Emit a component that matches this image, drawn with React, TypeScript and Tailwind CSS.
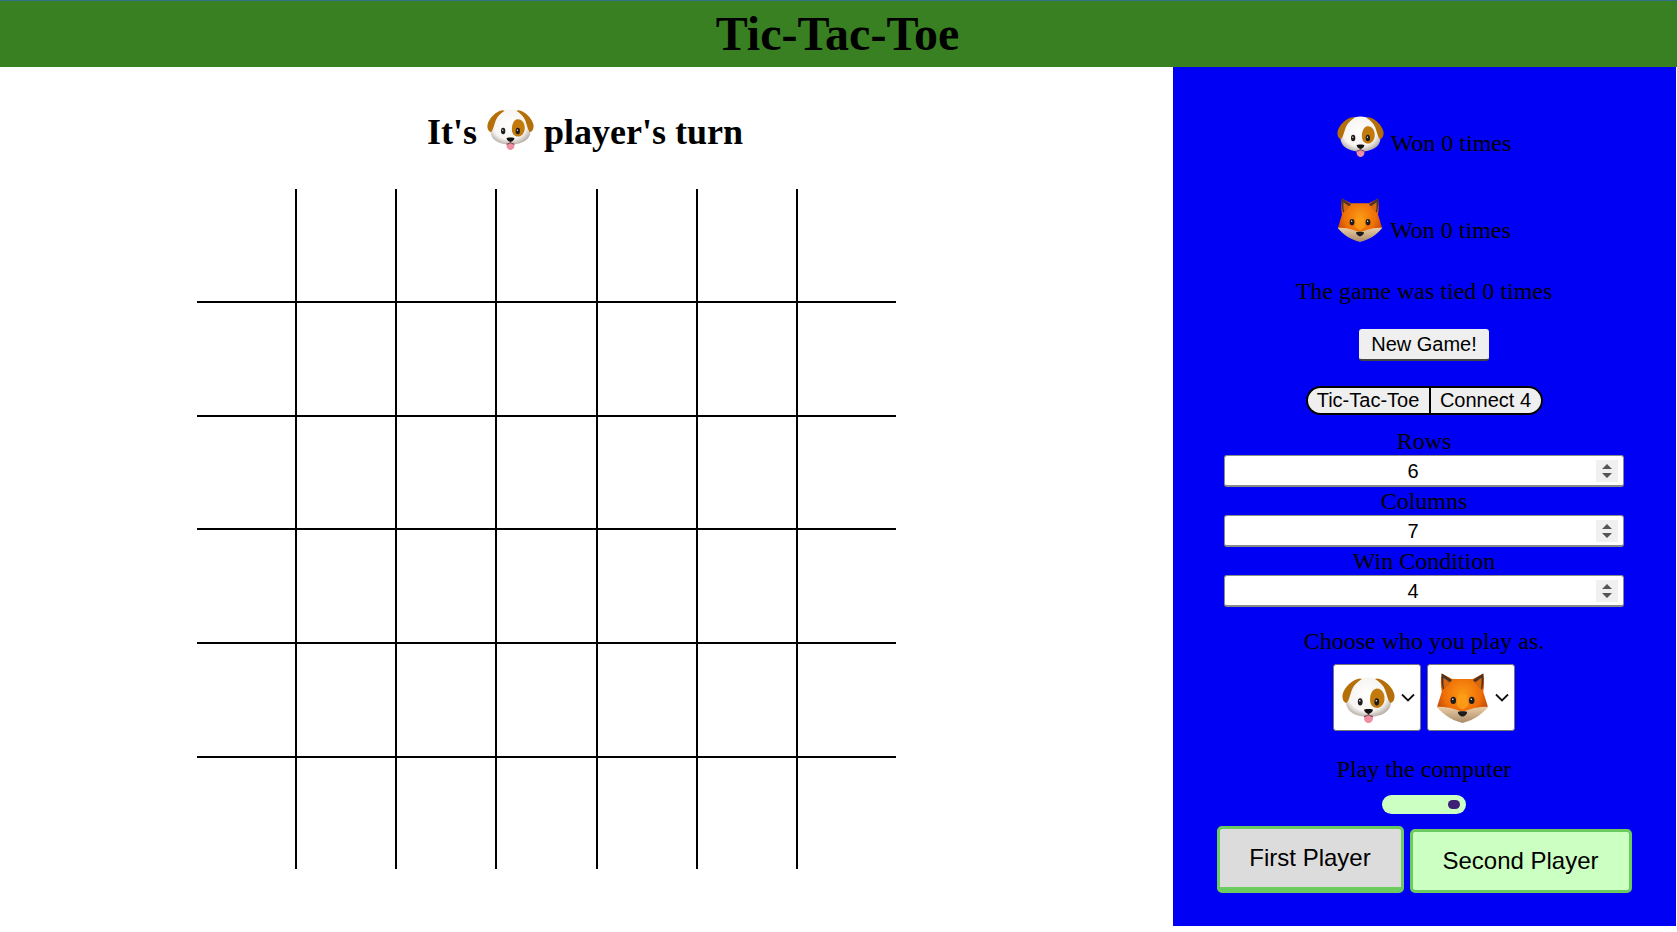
import React from "react";

function Dog({ size, id, className = "" }: { size: number; id: string; className?: string }) {
  return (
    <svg
      width={size}
      height={Math.round(size * 0.875)}
      viewBox="0 2.5 48 45.5"
      preserveAspectRatio="none"
      className={`inline-block shrink-0 ${className}`}
    >
      <defs>
        <radialGradient id={id} cx="0.48" cy="0.42" r="0.6">
          <stop offset="0" stopColor="#ffffff" />
          <stop offset="0.72" stopColor="#f7f4f1" />
          <stop offset="1" stopColor="#b5aea8" />
        </radialGradient>
      </defs>
      <path d="M24 3C16 3 10 7 8 14 4 20 2.500 27 4.500 32 7 39 15 42 24 42 33 42 41 39 43.500 32 45.500 27 44 20 40 14 38 7 32 3 24 3z" fill={`url(#${id})`} />
      <path d="M16 4C9 5 2 13 .5 20 0 25 2 28 4 28 6 27 7 21 9 15 10.500 11 14 7 18 4.500z" fill="#b56f08" />
      <path d="M32 4C39 5 46 13 47.500 20 48 25 46 28 44 28 42 27 41 21 39 15 37.500 11 34 7 30 4.500z" fill="#b56f08" />
      <path d="M31 14C36 13.500 39 19 38.500 25 38 30 34.500 34 30.500 33 26.500 32 25 28 25.500 23 26 18 28 14.500 31 14z" fill="#c27a0c" />
      <ellipse cx="16.500" cy="27" rx="2.200" ry="3.600" fill="#1d1d1f" />
      <ellipse cx="31.500" cy="27" rx="2.200" ry="3.600" fill="#1d1d1f" />
      <circle cx="16.100" cy="26" r="0.700" fill="#fff" />
      <circle cx="31.100" cy="26" r="0.700" fill="#fff" />
      <path d="M20 40v3.500c0 2.500 2 4.500 4 4.500s4-2 4-4.500V40z" fill="#ee8ea3" />
      <path d="M20 35c0-1.200 8-1.200 8 0 0 1.800-2.500 4-4 4s-4-2.200-4-4z" fill="#111" />
      <path d="M24 38.500v1.500M20 41.500c2 0 3-1.500 4-1.500s2 1.500 4 1.500" stroke="#333" strokeWidth="0.800" fill="none" />
    </svg>
  );
}

function Fox({ width, height, id, className = "" }: { width: number; height: number; id: string; className?: string }) {
  return (
    <svg
      width={width}
      height={height}
      viewBox="1 1.500 46 46.500"
      preserveAspectRatio="none"
      className={`inline-block shrink-0 ${className}`}
    >
      <defs>
        <radialGradient id={id} cx="0.5" cy="0.42" r="0.6">
          <stop offset="0" stopColor="#fb9a14" />
          <stop offset="0.6" stopColor="#ef6f08" />
          <stop offset="1" stopColor="#b83f05" />
        </radialGradient>
        <linearGradient id={`${id}c`} x1="0" y1="0" x2="0" y2="1">
          <stop offset="0" stopColor="#eccfa7" />
          <stop offset="1" stopColor="#a98a68" />
        </linearGradient>
      </defs>
      <path d="M6 2l9 5h18l9-5c1 6 1 12 0 17l4 14c-6 6-11 10-22 14C13 43 8 39 2 33l4-14C5 13 5 7 6 2z" fill={`url(#${id})`} />
      <path d="M6 2l9 6-8 9C6 12 5.500 7 6 2zM42 2l-9 6 8 9c1-5 1.500-10 1-15z" fill="#4c3425" />
      <path d="M7.500 6l6 4.500L8 16c-.5-3-.7-7-.5-10zM40.500 6l-6 4.500L40 16c.5-3 .7-7 .5-10z" fill="#d76a10" />
      <path d="M20 22h8l1 10-5 4-5-4z" fill="#fca018" opacity="0.8" />
      <path d="M1.500 33c5-.5 11 .5 15 2 3 1 5 2 7.500 2s4.500-1 7.500-2c4-1.500 10-2.500 15-2-5 6-11 12-22.500 15C12.500 45 6.500 39 1.500 33z" fill={`url(#${id}c)`} />
      <ellipse cx="16" cy="27" rx="2.400" ry="3.300" fill="#1d1d1f" />
      <ellipse cx="32" cy="27" rx="2.400" ry="3.300" fill="#1d1d1f" />
      <circle cx="15.600" cy="26" r="0.700" fill="#fff" />
      <circle cx="31.600" cy="26" r="0.700" fill="#fff" />
      <path d="M20 38c0-1.200 8-1.200 8 0 0 1.800-2.500 4-4 4s-4-2.200-4-4z" fill="#1b1b1b" />
    </svg>
  );
}

function NumberField({ value }: { value: string }) {
  return (
    <div className="flex h-8 w-[400px] items-center rounded-[3px] border border-b-2 border-[#8a8a8a] bg-white pr-[5px] font-['Liberation_Sans',sans-serif] text-[20px] text-black">
      <span className="flex-1 pl-[5px] text-center">{value}</span>
      <span className="flex h-[22px] w-[22px] items-center justify-center bg-[#f0f0f0]">
        <svg width="12" height="16" viewBox="0 0 12 16">
          <path d="M6 1l5 5H1zM6 15l-5-5h10z" fill="#555555" />
        </svg>
      </span>
    </div>
  );
}

function Picker({ children }: { children: React.ReactNode }) {
  return (
    <div className="flex h-[67px] w-[88px] items-center rounded-[3px] border border-[#767676] bg-white pl-[8px]">
      {children}
      <svg width="14" height="9" viewBox="0 0 14 9" className="ml-[6px]">
        <path d="M1 1.500l6 6 6-6" stroke="#111" strokeWidth="1.800" fill="none" />
      </svg>
    </div>
  );
}

const label = "text-center text-[24px] leading-[28px]";

const rowHeights = [114, 114, 113, 114, 114, 111];
const colWidths = [100, 100, 100, 101, 100, 100, 98];

export default function App() {
  return (
    <div className="h-[932px] w-[1677px] overflow-hidden bg-white font-['Liberation_Serif',serif] text-black">
      <header className="flex h-[67px] items-center justify-center border-t border-[#33708a] bg-[#388022] pr-[2px]">
        <h1 className="text-[48px] leading-none font-bold">Tic-Tac-Toe</h1>
      </header>
      <div className="flex">
        <main className="flex w-[1173px] flex-col pt-[36px]">
          <h2 className="flex h-[48px] w-[1170px] items-center justify-center gap-[10px] text-[36px] leading-[48px] font-bold">
            <span className="pt-[9px]">It's</span>
            <Dog size={47} id="dogTurn" className="mt-[5px]" />
            <span className="pt-[9px]">player's turn</span>
          </h2>
          <div
            className="mt-[38px] ml-[197px] grid w-[699px]"
            style={{
              gridTemplateColumns: colWidths.map((w) => `${w}px`).join(" "),
              gridTemplateRows: rowHeights.map((h) => `${h}px`).join(" "),
            }}
          >
            {Array.from({ length: 42 }).map((_, i) => (
              <div
                key={i}
                className={`border-black ${(i + 1) % 7 !== 0 ? "border-r-2" : ""} ${i < 35 ? "border-b-2" : ""}`}
              />
            ))}
          </div>
        </main>
        <aside className="flex h-[859px] w-[503px] flex-col items-center bg-[#0000f5] pt-[47px] pr-[1px]">
          <div className="flex h-[46px] items-end gap-[7px]">
            <Dog size={47} id="dogScore" className="mb-[3px]" />
            <span className={`${label} mb-[3px]`}>Won 0 times</span>
          </div>
          <div className="mt-[37px] flex h-[46px] items-end gap-[7px]">
            <Fox width={46} height={44} id="foxScore" className="mb-[1px]" />
            <span className={`${label} -mb-[1px]`}>Won 0 times</span>
          </div>
          <p className={`${label} mt-[34px]`}>The game was tied 0 times</p>
          <button className="mt-[24px] h-[32px] w-[130px] rounded-[3px] border-b-2 border-[#444444] bg-[#efefef] font-['Liberation_Sans',sans-serif] text-[20px] text-black">
            New Game!
          </button>
          <div className="mt-[25px] flex h-[29px] w-[237px] overflow-hidden rounded-full border-2 border-black bg-[#efefef] font-['Liberation_Sans',sans-serif] text-[20px] leading-[25px] text-black">
            <span className="w-[123px] border-r-2 border-black text-center">Tic-Tac-Toe</span>
            <span className="flex-1 text-center">Connect 4</span>
          </div>
          <p className={`${label} mt-[12px]`}>Rows</p>
          <NumberField value="6" />
          <p className={label}>Columns</p>
          <NumberField value="7" />
          <p className={label}>Win Condition</p>
          <NumberField value="4" />
          <p className={`${label} mt-[20px]`}>Choose who you play as.</p>
          <div className="mt-[9px] flex gap-[6px]">
            <Picker>
              <Dog size={53} id="dogPick" className="mt-[5px]" />
            </Picker>
            <Picker>
              <Fox width={53} height={50} id="foxPick" />
            </Picker>
          </div>
          <p className={`${label} mt-[24px]`}>Play the computer</p>
          <div className="mt-[12px] flex h-[19px] w-[84px] items-center justify-end rounded-full bg-[#ccffc2] pr-[6px]">
            <span className="mb-[1px] h-[9px] w-[12px] rounded-full bg-[#3f2076]" />
          </div>
          <div className="mt-[12px] flex items-end gap-[6px]">
            <button className="h-[67px] w-[187px] rounded-[5px] border-[3px] border-b-[6px] border-[#6ccb5f] bg-[#dcdcdc] font-['Liberation_Sans',sans-serif] text-[24px] text-black">
              First Player
            </button>
            <button className="h-[64px] w-[222px] rounded-[5px] border-[3px] border-[#6ccb5f] bg-[#ccffc2] font-['Liberation_Sans',sans-serif] text-[24px] text-black">
              Second Player
            </button>
          </div>
        </aside>
      </div>
    </div>
  );
}
